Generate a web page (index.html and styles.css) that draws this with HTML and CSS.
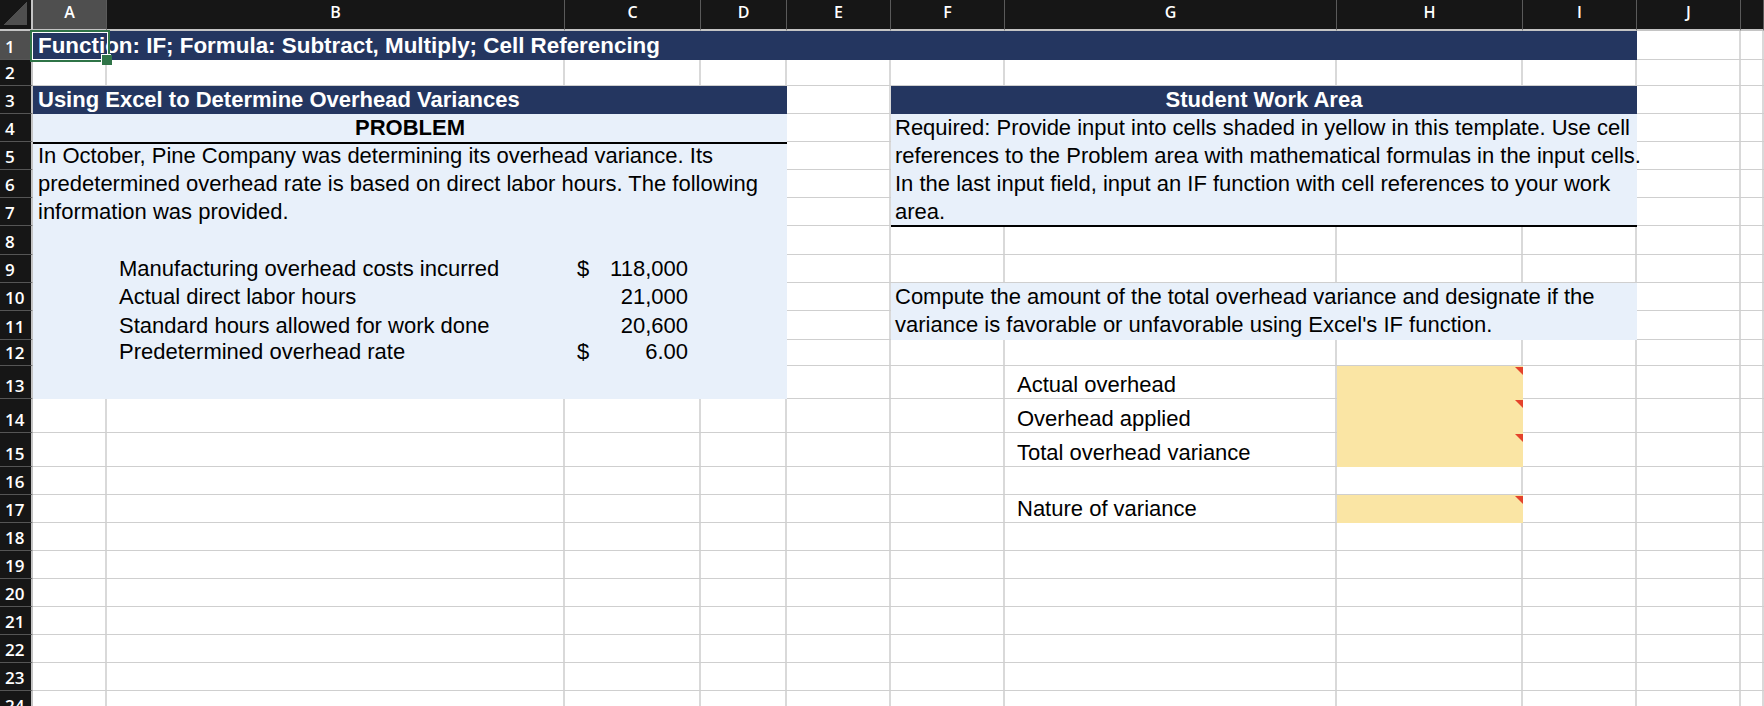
FILE: index.html
```html
<!DOCTYPE html>
<html>
<head>
<meta charset="utf-8">
<title>Overhead Variances</title>
<link rel="stylesheet" href="styles.css">
</head>
<body>
<div class="sheet">
  <!-- column headers -->
  <div class="corner"></div>
  <div class="ch cA on">A</div>
  <div class="ch cB">B</div>
  <div class="ch cC">C</div>
  <div class="ch cD">D</div>
  <div class="ch cE">E</div>
  <div class="ch cF">F</div>
  <div class="ch cG">G</div>
  <div class="ch cH">H</div>
  <div class="ch cI">I</div>
  <div class="ch cJ">J</div>
  <div class="ch cK"></div>

  <!-- row headers -->
  <div class="rh r1 on">1</div>
  <div class="rh r2">2</div>
  <div class="rh r3">3</div>
  <div class="rh r4">4</div>
  <div class="rh r5">5</div>
  <div class="rh r6">6</div>
  <div class="rh r7">7</div>
  <div class="rh r8">8</div>
  <div class="rh r9">9</div>
  <div class="rh r10">10</div>
  <div class="rh r11">11</div>
  <div class="rh r12">12</div>
  <div class="rh r13">13</div>
  <div class="rh r14">14</div>
  <div class="rh r15">15</div>
  <div class="rh r16">16</div>
  <div class="rh r17">17</div>
  <div class="rh r18">18</div>
  <div class="rh r19">19</div>
  <div class="rh r20">20</div>
  <div class="rh r21">21</div>
  <div class="rh r22">22</div>
  <div class="rh r23">23</div>
  <div class="rh r24">24</div>

  <!-- gridlines -->
  <div class="vl cA"></div><div class="vl cB"></div><div class="vl cC"></div>
  <div class="vl cD"></div><div class="vl cE"></div><div class="vl cF"></div>
  <div class="vl cG"></div><div class="vl cH"></div><div class="vl cI"></div>
  <div class="vl cJ"></div><div class="vl cK"></div>
  <div class="hl r1"></div><div class="hl r2"></div><div class="hl r3"></div>
  <div class="hl r4"></div><div class="hl r5"></div><div class="hl r6"></div>
  <div class="hl r7"></div><div class="hl r8"></div><div class="hl r9"></div>
  <div class="hl r10"></div><div class="hl r11"></div><div class="hl r12"></div>
  <div class="hl r13"></div><div class="hl r14"></div><div class="hl r15"></div>
  <div class="hl r16"></div><div class="hl r17"></div><div class="hl r18"></div>
  <div class="hl r19"></div><div class="hl r20"></div><div class="hl r21"></div>
  <div class="hl r22"></div><div class="hl r23"></div><div class="hl r24"></div>

  <!-- content -->
  <div class="navy title">Function: IF; Formula: Subtract, Multiply; Cell Referencing</div>
  <div class="navy sec-left">Using Excel to Determine Overhead Variances</div>
  <div class="navy sec-right">Student Work Area</div>

  <div class="blue problem-area"></div>
  <div class="problem-head">PROBLEM</div>
  <div class="para problem-text">In October, Pine Company was determining its overhead variance. Its<br>predetermined overhead rate is based on direct labor hours. The following<br>information was provided.</div>

  <div class="lbl cB r9">Manufacturing overhead costs incurred</div>
  <div class="lbl cB r10">Actual direct labor hours</div>
  <div class="lbl cB r11">Standard hours allowed for work done</div>
  <div class="lbl cB r12">Predetermined overhead rate</div>
  <div class="amt cC r9"><span>$</span><span>118,000</span></div>
  <div class="amt cC r10"><span></span><span>21,000</span></div>
  <div class="amt cC r11"><span></span><span>20,600</span></div>
  <div class="amt cC r12"><span>$</span><span>6.00</span></div>

  <div class="blue para req">Required: Provide input into cells shaded in yellow in this template. Use cell<br>references to the Problem area with mathematical formulas in the input cells.<br>In the last input field, input an IF function with cell references to your work<br>area.</div>
  <div class="blue para compute">Compute the amount of the total overhead variance and designate if the<br>variance is favorable or unfavorable using Excel's IF function.</div>

  <div class="lbl glbl cG r13">Actual overhead</div>
  <div class="lbl glbl cG r14">Overhead applied</div>
  <div class="lbl glbl cG r15">Total overhead variance</div>
  <div class="lbl glbl cG r17">Nature of variance</div>
  <div class="input cH r13"></div>
  <div class="input cH r14"></div>
  <div class="input cH r15"></div>
  <div class="input cH r17"></div>

  <!-- active cell A1 -->
  <div class="sel cA r1">
    <div class="sel-box"></div>
    <div class="sel-handle"></div>
  </div>
</div>
</body>
</html>
```

FILE: styles.css
```css
* { box-sizing: border-box; }
html, body {
  margin: 0;
  height: 706px;
  overflow: hidden;
  background: #fff;
}
.sheet {
  display: grid;
  grid-template-columns: 33px 74px 458px 136px 86px 104px 114px 332px 186px 114px 104px 1fr;
  grid-template-rows: 31px 29px 26px 28px 28px 28px 28px 28px 29px 28px 28px 29px 26px 33px 34px 34px 28px 28px 28px 28px 28px 28px 28px 28px 28px;
  height: 706px;
  overflow: hidden;
  font-family: "Liberation Sans", Arial, sans-serif;
  font-size: 22px;
  color: #000;
}

/* placement */
.cA { grid-column: 2; } .cB { grid-column: 3; } .cC { grid-column: 4; }
.cD { grid-column: 5; } .cE { grid-column: 6; } .cF { grid-column: 7; }
.cG { grid-column: 8; } .cH { grid-column: 9; } .cI { grid-column: 10; }
.cJ { grid-column: 11; } .cK { grid-column: 12; }
.r1 { grid-row: 2; } .r2 { grid-row: 3; } .r3 { grid-row: 4; } .r4 { grid-row: 5; }
.r5 { grid-row: 6; } .r6 { grid-row: 7; } .r7 { grid-row: 8; } .r8 { grid-row: 9; }
.r9 { grid-row: 10; } .r10 { grid-row: 11; } .r11 { grid-row: 12; } .r12 { grid-row: 13; }
.r13 { grid-row: 14; } .r14 { grid-row: 15; } .r15 { grid-row: 16; } .r16 { grid-row: 17; }
.r17 { grid-row: 18; } .r18 { grid-row: 19; } .r19 { grid-row: 20; } .r20 { grid-row: 21; }
.r21 { grid-row: 22; } .r22 { grid-row: 23; } .r23 { grid-row: 24; } .r24 { grid-row: 25; }

/* headers */
.corner {
  grid-row: 1;
  grid-column: 1;
  background-color: #161616;
  background-image: linear-gradient(to bottom right, transparent 50%, #4f4f4f 50%);
  background-repeat: no-repeat;
  background-size: 24px 23px;
  background-position: right 4px bottom 4px;
  border-right: 2px solid #c4c4c4;
  border-bottom: 2px solid #c4c4c4;
}
.ch {
  grid-row: 1;
  background: #161616;
  color: #fff;
  border-right: 1px solid #5a5a5a;
  border-bottom: 2px solid #c4c4c4;
  font-family: "Open Sans", "DejaVu Sans", sans-serif;
  font-size: 16px;
  font-weight: 600;
  line-height: 24px;
  text-align: center;
}
.rh {
  grid-column: 1;
  background: #161616;
  color: #fff;
  border-right: 2px solid #c4c4c4;
  border-bottom: 1px solid #555;
  font-family: "Open Sans", "DejaVu Sans", sans-serif;
  font-size: 17px;
  font-weight: 600;
  line-height: 20px;
  display: flex;
  align-items: flex-end;
  padding: 0 0 2px 5px;
  overflow: hidden;
}
.ch.on, .rh.on { background-color: #4f4f4f; }

/* gridlines */
.vl { grid-row: 2 / -1; border-right: 2px solid #d9d9d9; }
.hl { grid-column: 2 / -1; border-bottom: 1px solid #cfcfcf; }

/* fills */
.navy {
  background: #243660;
  color: #fff;
  font-weight: bold;
  line-height: 28px;
  white-space: nowrap;
}
.blue { background: #e8f0fa; }

.title {
  grid-row: 2;
  grid-column: 2 / 11;
  display: flex;
  align-items: flex-end;
  padding-left: 5px;
  font-size: 22.4px;
}
.sec-left { grid-row: 4; grid-column: 2 / 6; padding-left: 5px; }
.sec-right { grid-row: 4; grid-column: 7 / 11; text-align: center; }

.problem-area { grid-row: 5 / 15; grid-column: 2 / 6; }
.problem-head {
  grid-row: 5;
  grid-column: 2 / 6;
  margin-bottom: -2px;
  border-bottom: 2px solid #000;
  font-weight: bold;
  text-align: center;
  line-height: 28px;
}
.para {
  line-height: 28px;
  white-space: nowrap;
  padding-left: 5px;
}
.problem-text { grid-row: 6 / 9; grid-column: 2 / 6; }
.req {
  grid-row: 5 / 9;
  grid-column: 7 / 11;
  padding-left: 4px;
  margin-bottom: -1px;
  border-bottom: 2px solid #000;
}
.compute { grid-row: 11 / 13; grid-column: 7 / 11; padding-left: 4px; }

.lbl {
  display: flex;
  align-items: flex-end;
  line-height: 28px;
  white-space: nowrap;
  padding-left: 12px;
}
.glbl { padding-left: 12px; }
.amt {
  display: flex;
  justify-content: space-between;
  align-items: flex-end;
  line-height: 28px;
  padding: 0 13px 0 12px;
}

.input { background: #fae5a4; position: relative; }
.input::after {
  content: "";
  position: absolute;
  top: 1px;
  right: 0;
  width: 8px;
  height: 8px;
  background: #e4432b;
  clip-path: polygon(0 0, 100% 0, 100% 100%);
}

/* active cell */
.sel { position: relative; }
.sel-box {
  position: absolute;
  top: -1px;
  left: -3px;
  right: -3px;
  bottom: -2px;
  border: 2px solid #2f7447;
  box-shadow: inset 0 0 0 1px #fff;
}
.sel-handle {
  position: absolute;
  right: -5px;
  bottom: -5px;
  width: 10px;
  height: 10px;
  background: #2f7447;
  box-shadow: -1px -1px 0 #fff;
}
```
